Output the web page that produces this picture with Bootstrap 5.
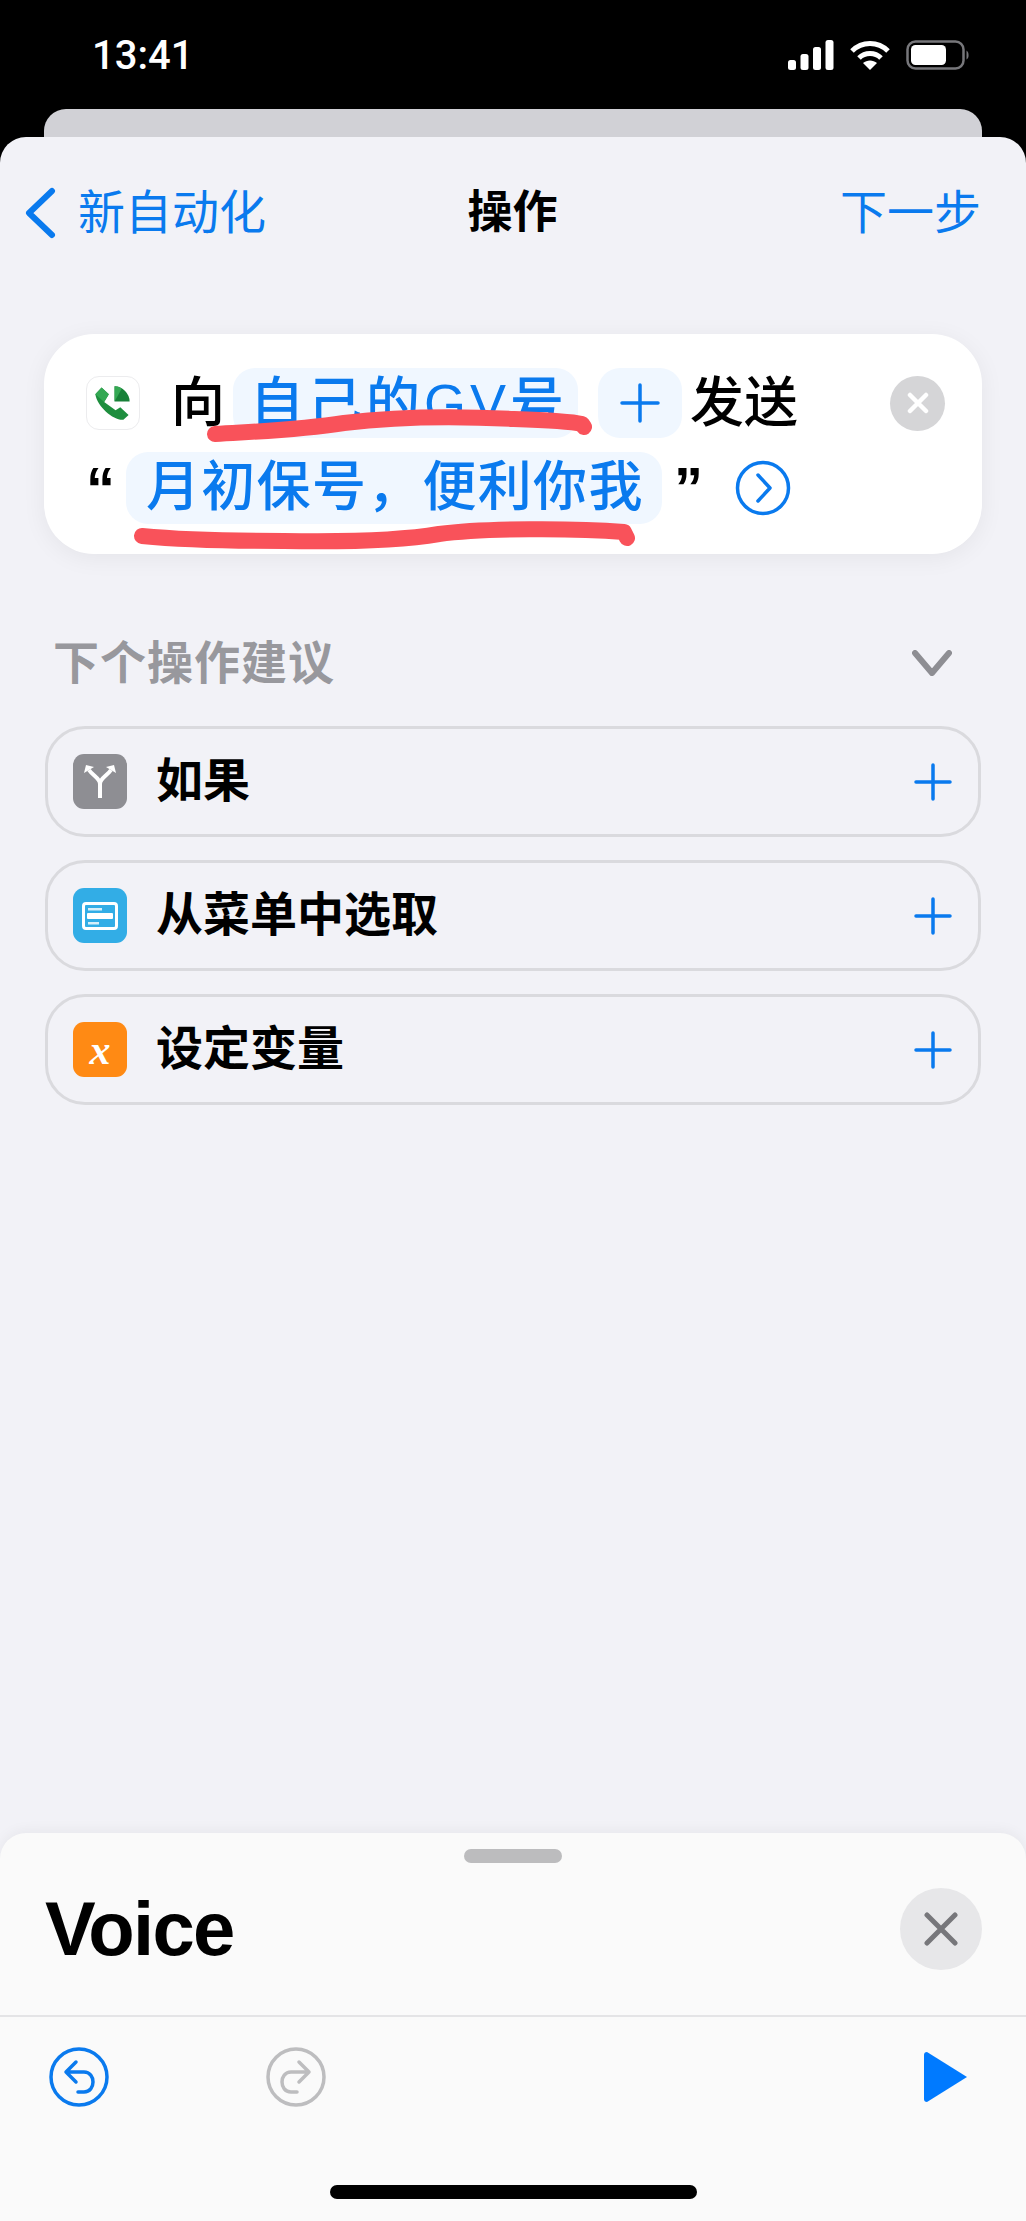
<!DOCTYPE html>
<html lang="zh-CN">
<head>
<meta charset="UTF-8">
<title>操作</title>
<link href="https://cdn.jsdelivr.net/npm/bootstrap@5.3.0/dist/css/bootstrap.min.css" rel="stylesheet">
<style>
  html, body { height: 100%; }
  body {
    background: #000;
    font-family: "Liberation Sans", "Noto Sans CJK SC", sans-serif;
    overflow: hidden;
  }
  .phone { width: 1026px; height: 2221px; }
  .status-bar { height: 109px; padding: 40px 56px 0 92px; color: #fff; }
  .clock { font-family: Roboto, sans-serif; font-size: 40px; line-height: 32px; font-weight: 500; }
  .back-sheet { height: 28px; margin: 0 44px; background: #d1d1d6; border-radius: 22px 22px 0 0; }
  .main-sheet { background: #f2f2f7; border-radius: 26px 26px 0 0; min-height: 0; }
  .nav-row { height: 197px; padding: 50px 45px 0 24px; font-size: 47px; line-height: 52px; color: #0a7aee; }
  .nav-title { color: #000; font-weight: 700; font-size: 45px; }
  .nav-back { gap: 22px; width: 340px; }
  .nav-next { width: 320px; text-align: right; }
  .action-card {
    margin: 0 44px; height: 220px; padding: 34px 37px 0 42px;
    background: #fff; border-radius: 50px;
    box-shadow: 0 4px 24px rgba(0, 0, 0, .06);
    font-size: 54px; line-height: 70px; color: #000; font-weight: 500;
  }
  .voice-icon { width: 54px; height: 54px; border: 1px solid #ececee; border-radius: 13px; }
  .word-to { margin: 0 8px 0 31px; }
  .chip { background: #f0f7ff; color: #0a7aee; border-radius: 22px; height: 70px; }
  .chip-number { width: 345px; padding-left: 17px; letter-spacing: 4px; white-space: nowrap; }
  .chip-plus { width: 84px; margin: 0 8px 0 20px; }
  .clear-btn { width: 55px; height: 55px; border-radius: 50%; background: #d5d5d7; }
  .second-line { margin-top: 14px; margin-left: 0; }
  .quote { font-weight: 700; width: 40px; font-size: 58px; }
  .chip-text { width: 536px; height: 72px; padding-left: 20px; white-space: nowrap; letter-spacing: 1.3px; }
  .quote-end { margin-left: 12px; }
  .go-btn { margin-left: 21px; }
  .scribble { position: absolute; left: 0; top: 0; pointer-events: none; }
  .section-head { margin: 86px 74px 0 53px; height: 46px; font-size: 46px; line-height: 46px; font-weight: 700; color: #98989d; letter-spacing: 1px; }
  .suggest-list { margin: 40px 45px 0 45px; gap: 23px; }
  .suggest-row {
    height: 111px; padding: 0 26px 0 25px;
    border: 3px solid #dadade; border-radius: 40px;
    font-size: 47px; font-weight: 700; color: #000;
  }
  .suggest-icon { width: 54px; height: 55px; border-radius: 11px; margin-right: 29px; }
  .tint-gray { background: #8e8e93; }
  .tint-blue { background: #32ade6; }
  .tint-orange { background: #ff8a14; color: #fff; font-family: "Liberation Serif", serif; font-style: italic; font-weight: 700; font-size: 42px; line-height: 46px; }
  .run-sheet { height: 388px; background: #fafafa; border-radius: 26px 26px 0 0; box-shadow: 0 -2px 14px rgba(0, 0, 0, .05); }
  .grabber { width: 98px; height: 14px; margin: 16px auto 0; background: #bcbcbe; border-radius: 7px; }
  .run-head { height: 154px; padding: 25px 44px 0 45px; border-bottom: 2px solid #e4e4e6; }
  .run-title { font-size: 76px; font-weight: 700; line-height: 82px; color: #000; letter-spacing: -1.700px; }
  .close-btn { width: 82px; height: 82px; border-radius: 50%; background: #e7e7e9; }
  .run-tools { padding: 30px 58px 0 49px; }
  .redo-gap { margin-left: 157px; }
  .home-bar { width: 367px; height: 14px; margin: 78px auto 0; background: #000; border-radius: 7px; }
</style>
</head>
<body>
<div class="phone d-flex flex-column">
  <div class="status-bar d-flex justify-content-between align-items-start">
    <div class="clock">13:41</div>
    <div class="d-flex align-items-start gap-3">
      <svg width="46" height="30" viewBox="0 0 46 30" fill="#fff"><rect x="0" y="20" width="8" height="10" rx="2.5"/><rect x="12.5" y="14" width="8" height="16" rx="2.5"/><rect x="25" y="7" width="8" height="23" rx="2.5"/><rect x="37.5" y="0" width="8" height="30" rx="2.5"/></svg>
      <svg width="40" height="30" viewBox="0 0 40 30" fill="none" stroke="#fff" stroke-width="5"><path d="M2 11C12 1 28 1 38 11"/><path d="M9 18C15 12 25 12 31 18"/><path d="M20 30L13 23C17 19.500 23 19.500 27 23Z" fill="#fff" stroke="none"/></svg>
      <svg width="64" height="30" viewBox="0 0 64 30" fill="none"><rect x="1.500" y="1.500" width="56" height="27" rx="8" stroke="#77777b" stroke-width="2.500"/><rect x="5" y="5" width="35" height="20" rx="4.500" fill="#fff"/><path d="M60.500 10.500C63 11.500 63.500 18.500 60.500 19.500Z" fill="#77777b"/></svg>
    </div>
  </div>
  <div class="back-sheet flex-shrink-0"></div>
  <div class="main-sheet flex-grow-1 d-flex flex-column">
    <div class="nav-row d-flex justify-content-between align-items-start flex-shrink-0">
      <div class="nav-back d-flex align-items-center">
        <svg width="32" height="52" viewBox="0 0 32 52" fill="none" stroke="#0a7aee" stroke-width="6" stroke-linecap="round" stroke-linejoin="round"><path d="M28 4L5 26L28 48"/></svg>
        <span>新自动化</span>
      </div>
      <div class="nav-title">操作</div>
      <div class="nav-next">下一步</div>
    </div>

    <div class="action-card position-relative flex-shrink-0">
      <div class="d-flex align-items-center">
        <div class="voice-icon d-flex align-items-center justify-content-center bg-white">
          <svg width="52" height="52" viewBox="0 0 100 100"><path d="M28 20L42 33L33 48L55 64L64 58L80 73L70 82C52 84 20 58 16 33Z" fill="#1e8e3e"/><path d="M28 20L42 33L33 48L16 33Z" fill="#34a853"/><path d="M53 18A30 30 0 0 1 82 47H53Z" fill="#188038"/><path d="M53 18A30 30 0 0 1 67 22L53 47Z" fill="#34a853"/></svg>
        </div>
        <span class="word-to">向</span>
        <span class="chip chip-number">自己的GV号</span>
        <span class="chip chip-plus d-flex align-items-center justify-content-center">
          <svg width="40" height="40" viewBox="0 0 40 40" stroke="#0a7aee" stroke-width="3.500" stroke-linecap="round"><path d="M20 2V38M2 20H38"/></svg>
        </span>
        <span>发送</span>
        <span class="clear-btn ms-auto d-flex align-items-center justify-content-center">
          <svg width="22" height="22" viewBox="0 0 22 22" stroke="#fff" stroke-width="4.500" stroke-linecap="round"><path d="M3 3L19 19M19 3L3 19"/></svg>
        </span>
      </div>
      <div class="d-flex align-items-center second-line">
        <span class="quote">“</span>
        <span class="chip chip-text">月初保号，便利你我</span>
        <span class="quote quote-end">”</span>
        <svg class="go-btn" width="56" height="56" viewBox="0 0 56 56" fill="none" stroke="#0a7aee" stroke-width="3.500"><circle cx="28" cy="28" r="25.500"/><path d="M23 15L35 28L23 41" stroke-linecap="round" stroke-linejoin="round"/></svg>
      </div>
      <svg class="scribble" width="938" height="220" viewBox="0 0 938 220" fill="none" stroke="#f9525a" stroke-linecap="round" stroke-linejoin="round">
        <path d="M171 100C220 97 255 96 300 89C350 83 410 82 470 85C500 86 525 87 538 90L540 93" stroke-width="16"/>
        <path d="M98 202C150 207 200 207 240 207C300 208 355 207 395 200C440 194 530 194 580 198L583 204" stroke-width="16"/>
      </svg>
    </div>

    <div class="section-head d-flex justify-content-between align-items-center flex-shrink-0">
      <span>下个操作建议</span>
      <svg width="40" height="26" viewBox="0 0 40 26" fill="none" stroke="#8e8e93" stroke-width="6" stroke-linecap="round" stroke-linejoin="round"><path d="M3 3L20 23L37 3"/></svg>
    </div>

    <div class="suggest-list d-flex flex-column flex-shrink-0">
      <div class="suggest-row d-flex align-items-center">
        <div class="suggest-icon tint-gray d-flex align-items-center justify-content-center">
          <svg width="34" height="36" viewBox="0 0 34 36" fill="none" stroke="#fff" stroke-width="4"><path d="M17 34V20C17 14 10 12 6 6M17 20C17 14 24 12 28 6"/><path d="M1 9L3 1L11 3ZM33 9L31 1L23 3Z" fill="#fff" stroke="none"/></svg>
        </div>
        <span class="flex-grow-1">如果</span>
        <svg width="38" height="38" viewBox="0 0 38 38" stroke="#0a7aee" stroke-width="3.500" stroke-linecap="round"><path d="M19 2V36M2 19H36"/></svg>
      </div>
      <div class="suggest-row d-flex align-items-center">
        <div class="suggest-icon tint-blue d-flex align-items-center justify-content-center">
          <svg width="36" height="28" viewBox="0 0 36 28"><rect x="1.500" y="1.500" width="33" height="25" rx="2.500" fill="none" stroke="#fff" stroke-width="3"/><rect x="6" y="6" width="14" height="2.500" fill="#fff" opacity=".8"/><rect x="5" y="11" width="26" height="6" rx="1" fill="#fff"/><rect x="6" y="20" width="11" height="2.500" fill="#fff" opacity=".8"/></svg>
        </div>
        <span class="flex-grow-1">从菜单中选取</span>
        <svg width="38" height="38" viewBox="0 0 38 38" stroke="#0a7aee" stroke-width="3.500" stroke-linecap="round"><path d="M19 2V36M2 19H36"/></svg>
      </div>
      <div class="suggest-row d-flex align-items-center">
        <div class="suggest-icon tint-orange d-flex align-items-center justify-content-center">x</div>
        <span class="flex-grow-1">设定变量</span>
        <svg width="38" height="38" viewBox="0 0 38 38" stroke="#0a7aee" stroke-width="3.500" stroke-linecap="round"><path d="M19 2V36M2 19H36"/></svg>
      </div>
    </div>

    <div class="run-sheet mt-auto flex-shrink-0">
      <div class="grabber"></div>
      <div class="run-head d-flex justify-content-between align-items-start">
        <div class="run-title">Voice</div>
        <div class="close-btn d-flex align-items-center justify-content-center">
          <svg width="34" height="34" viewBox="0 0 34 34" stroke="#77777b" stroke-width="5" stroke-linecap="round"><path d="M3 3L31 31M31 3L3 31"/></svg>
        </div>
      </div>
      <div class="run-tools d-flex align-items-center">
        <svg width="60" height="60" viewBox="0 0 60 60" fill="none" stroke="#0a7aee" stroke-width="3.500" stroke-linecap="round" stroke-linejoin="round"><circle cx="30" cy="30" r="28"/><path d="M27 15L17 25L27 35M17 25H35C47 25 47 45 35 45H29"/></svg>
        <svg class="redo-gap" width="60" height="60" viewBox="0 0 60 60" fill="none" stroke="#bdbdbf" stroke-width="3.500" stroke-linecap="round" stroke-linejoin="round"><circle cx="30" cy="30" r="28"/><path d="M33 15L43 25L33 35M43 25H25C13 25 13 45 25 45H31"/></svg>
        <svg class="ms-auto" width="44" height="50" viewBox="0 0 44 50"><path d="M3 0L43 25L3 50C1 50 0 49 0 47V3C0 1 1 0 3 0Z" fill="#007aff"/></svg>
      </div>
      <div class="home-bar"></div>
    </div>
  </div>
</div>
<script src="https://cdn.jsdelivr.net/npm/bootstrap@5.3.0/dist/js/bootstrap.bundle.min.js"></script>
</body>
</html>
